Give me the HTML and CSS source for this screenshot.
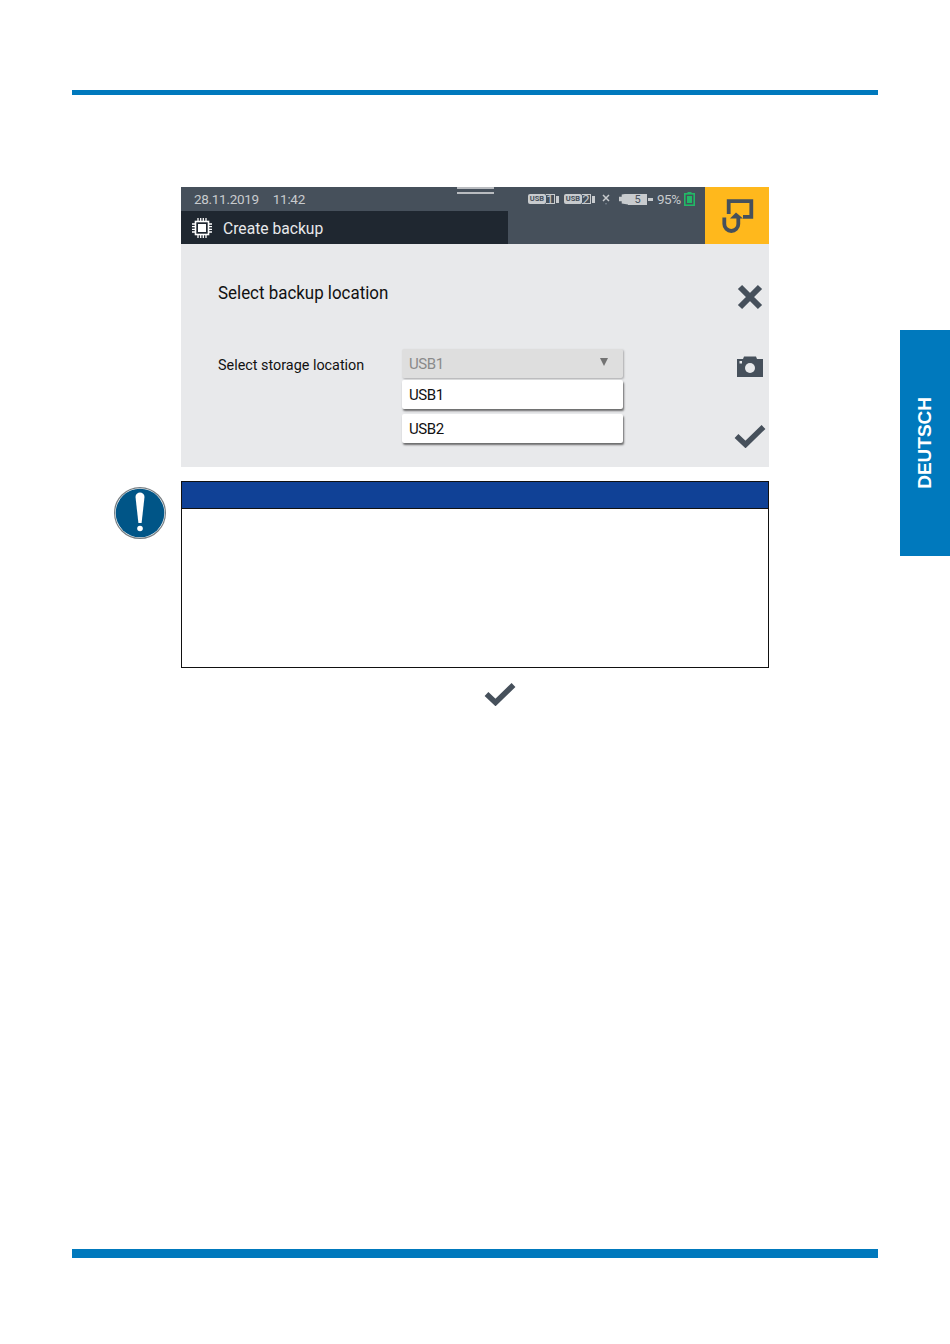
FILE: index.html
```html
<!DOCTYPE html>
<html lang="en">
<head>
  <meta charset="UTF-8" />
  <title>Create backup</title>
  <link rel="stylesheet" href="styles.css">
</head>
<body>
  <div class="page">
    <div class="rule-top"></div>

    <div class="side-tab"><span>DEUTSCH</span></div>

    <main class="content">
      <section class="device">
        <div class="device-head">
          <div class="head-left">
            <div class="status-left">
              <span>28.11.2019</span>
              <span>11:42</span>
            </div>
            <div class="title-bar">
              <svg class="chip-icon" viewBox="0 0 22 22" width="22" height="22">
                <rect x="4.5" y="4.5" width="13" height="13" fill="none" stroke="#fff" stroke-width="1.6"/>
                <rect x="7" y="7" width="8" height="8" fill="#fff"/>
                <path d="M7 1v3M9.7 1v3M12.3 1v3M15 1v3M7 18v3M9.7 18v3M12.3 18v3M15 18v3M1 7h3M1 9.7h3M1 12.3h3M1 15h3M18 7h3M18 9.7h3M18 12.3h3M18 15h3" stroke="#fff" stroke-width="1.3"/>
              </svg>
              <span class="title-text">Create backup</span>
            </div>
          </div>
          <div class="head-right">
            <div class="grip"></div>
            <div class="status-icons">
              <span class="usb"><span class="usb-body">USB</span><span class="usb-num">1</span><span class="usb-end"></span></span>
              <span class="usb"><span class="usb-body">USB</span><span class="usb-num">2</span><span class="usb-end"></span></span>
              <svg class="net-x" viewBox="0 0 10 12" width="10" height="12">
                <path d="M2 2l6 6M8 2l-6 6" stroke="#c8cbce" stroke-width="1.5"/>
                <rect x="4.3" y="10" width="1.4" height="1.4" fill="#7d8894"/>
              </svg>
              <span class="probe"><span class="probe-tip"></span><span class="probe-body">5</span><span class="probe-end"></span></span>
              <span class="percent">95%</span>
              <svg class="battery" viewBox="0 0 11 14" width="11" height="14">
                <rect x="3.5" y="0" width="4" height="2" fill="#22b866"/>
                <rect x="0.8" y="1.8" width="9.4" height="11.4" fill="none" stroke="#22b866" stroke-width="1.6"/>
                <rect x="3" y="4" width="5" height="7" fill="#22b866"/>
              </svg>
            </div>
          </div>
          <div class="home-btn">
            <svg viewBox="0 0 34 34" width="34" height="34">
              <path d="M8.700 15V2.200H31.300V17.800H23" fill="none" stroke="#46505b" stroke-width="3.800"/>
              <path d="M4.300 18.500V25a7 7 0 0 0 14 0V18" fill="none" stroke="#46505b" stroke-width="3.800"/>
              <path d="M10 19.500L16 13.500L23 19.500z" fill="#46505b"/>
            </svg>
          </div>
        </div>

        <div class="device-body">
          <div class="form-area">
            <h1 class="form-title">Select backup location</h1>
            <div class="form-row">
              <label class="form-label">Select storage location</label>
              <div class="dropdown">
                <div class="dropdown-current">
                  <span>USB1</span>
                  <span class="caret"></span>
                </div>
                <div class="dropdown-option">USB1</div>
                <div class="dropdown-option">USB2</div>
              </div>
            </div>
          </div>
          <div class="tools">
            <svg viewBox="0 0 26 26" width="26" height="26">
              <path d="M3 3l20 20M23 3L3 23" stroke="#46505b" stroke-width="6"/>
            </svg>
            <svg viewBox="0 0 28 22" width="28" height="22">
              <path d="M1 3H7L8 .5H20L21 3H27V21H1z" fill="#46505b"/>
              <circle cx="14" cy="12" r="5" fill="#e8e9eb"/>
              <rect x="3.500" y="5" width="2.500" height="2.500" fill="#e8e9eb"/>
            </svg>
            <svg viewBox="0 0 32 24" width="32" height="24">
              <path d="M2.500 12l9 8.500L29.500 3" fill="none" stroke="#46505b" stroke-width="5.500"/>
            </svg>
          </div>
        </div>
      </section>

      <section class="notice">
        <svg class="notice-icon" viewBox="0 0 52 52" width="52" height="52">
          <circle cx="26" cy="26" r="25.400" fill="#fff" stroke="#777f84" stroke-width="1.200"/>
          <circle cx="26" cy="26" r="24.300" fill="#005587"/>
          <path d="M21.500 10c0-6 9-6 9 0L27.600 36h-3.200z" fill="#fff"/>
          <circle cx="26" cy="41.500" r="2.800" fill="#fff"/>
        </svg>
        <div class="notice-head"></div>
        <div class="notice-body"></div>
      </section>

      <div class="step-check">
        <svg viewBox="0 0 32 24" width="32" height="24">
          <path d="M2.500 12l9 8.500L29.500 3" fill="none" stroke="#46505b" stroke-width="5.500"/>
        </svg>
      </div>
    </main>

    <div class="rule-bottom"></div>
  </div>
</body>
</html>
```

FILE: styles.css
```css
* {
  box-sizing: border-box;
  margin: 0;
  padding: 0;
}

body {
  background: #fff;
  font-family: Roboto, 'Liberation Sans', sans-serif;
  color: #111;
}

.page {
  position: relative;
  height: 1344px;
  padding: 90px 72px 0;
  overflow: hidden;
}

.rule-top {
  height: 5px;
  background: #0079bd;
}

.rule-bottom {
  height: 9px;
  margin-top: 543px;
  background: #0079bd;
}

.side-tab {
  position: absolute;
  top: 330px;
  right: 0;
  width: 50px;
  height: 226px;
  background: #0079bd;
  display: flex;
  align-items: center;
  justify-content: center;
}

.side-tab span {
  writing-mode: vertical-rl;
  transform: rotate(180deg);
  font-family: 'Liberation Sans', sans-serif;
  font-weight: bold;
  font-size: 19px;
  color: #fff;
}

.content {
  margin: 92px 0 0 109px;
  width: 588px;
}

/* device screen */
.device-head {
  display: flex;
  height: 57px;
  background: #46505b;
}

.head-left {
  width: 327px;
  display: flex;
  flex-direction: column;
}

.status-left {
  height: 24px;
  padding-left: 13px;
  display: flex;
  gap: 14px;
  align-items: center;
  font-size: 13.500px;
  letter-spacing: -0.3px;
  color: #c8cbce;
}

.title-bar {
  height: 33px;
  background: #1f2730;
  padding-left: 10px;
  display: flex;
  align-items: center;
  gap: 10px;
}

/* the screen font is narrower than Roboto */
.title-text {
  font-size: 17px;
  color: #e8e9eb;
  transform: scaleX(0.92);
  transform-origin: left;
}

.head-right {
  position: relative;
  width: 197px;
}

.grip {
  position: absolute;
  top: 0;
  left: -51px;
  width: 37px;
  height: 7px;
  border-top: 2px solid #b9bcc0;
  border-bottom: 2px solid #b9bcc0;
}

.status-icons {
  height: 24px;
  padding-left: 20px;
  display: flex;
  align-items: center;
  color: #c8cbce;
}

.usb {
  display: flex;
  align-items: center;
  width: 36px;
  height: 10px;
}

.usb-body {
  width: 18px;
  height: 10px;
  background: #c8cbce;
  color: #46505b;
  border-radius: 2px;
  font-size: 7.500px;
  font-weight: bold;
  line-height: 10px;
  text-align: center;
}

.usb-num {
  width: 9px;
  height: 10px;
  font-size: 13px;
  line-height: 10px;
  text-align: center;
  border: solid #c8cbce;
  border-width: 1px 1px 1px 0;
}

.usb-end {
  width: 3px;
  height: 7px;
  margin-left: 1px;
  background: #c8cbce;
}

.net-x {
  margin-left: 1px;
}

.probe {
  display: flex;
  align-items: center;
  margin-left: 8px;
}

.probe-tip {
  width: 9px;
  height: 11px;
  background: #c8cbce;
  clip-path: polygon(0 30%, 30% 30%, 30% 10%, 100% 0, 100% 100%, 30% 90%, 30% 70%, 0 70%);
}

.probe-body {
  width: 19px;
  height: 11px;
  background: #c8cbce;
  color: #46505b;
  font-size: 11px;
  line-height: 11px;
  text-align: center;
}

.probe-end {
  width: 5px;
  height: 3px;
  margin-left: 1px;
  background: #c8cbce;
}

.percent {
  margin-left: 4px;
  font-size: 13.500px;
  letter-spacing: -0.5px;
}

.battery {
  margin-left: 3px;
}

.home-btn {
  width: 64px;
  background: #ffb81c;
  display: flex;
  align-items: center;
  justify-content: center;
}

.device-body {
  display: flex;
  height: 223px;
  background: #e8e9eb;
}

.form-area {
  flex: 1;
  padding: 37px 0 0 37px;
}

.form-title {
  font-weight: normal;
  font-size: 18px;
  line-height: 24px;
  margin-bottom: 44px;
  transform: scaleX(0.94);
  transform-origin: left;
}

.form-row {
  display: flex;
  align-items: flex-start;
}

.form-label {
  width: 184px;
  padding-top: 6px;
  font-size: 15px;
  line-height: 20px;
  transform: scaleX(0.958);
  transform-origin: left;
}

.dropdown {
  width: 221px;
}

.dropdown-current,
.dropdown-option {
  height: 29px;
  padding: 0 7px;
  display: flex;
  align-items: center;
  font-size: 15px;
  letter-spacing: -0.4px;
  border-radius: 2px;
  box-shadow: 1px 2px 2px rgba(40, 40, 40, 0.65);
}

.dropdown-current {
  justify-content: space-between;
  background: #dedede;
  color: #8a8a8a;
  margin-bottom: 2px;
  box-shadow: 1px 1px 2px rgba(60, 60, 60, 0.35);
}

.dropdown-option {
  background: #fff;
  margin-bottom: 5px;
  color: #111;
}

.caret {
  width: 0;
  height: 0;
  margin: -3px 8px 0 0;
  border-left: 4px solid transparent;
  border-right: 4px solid transparent;
  border-top: 8px solid #737373;
}

.tools {
  width: 40px;
  padding: 40px 0 0 2px;
  display: flex;
  flex-direction: column;
  align-items: center;
  gap: 46px;
}

/* notice box */
.notice {
  position: relative;
  margin-top: 14px;
  height: 187px;
  border: 1px solid #111;
}

.notice-icon {
  position: absolute;
  top: 5px;
  left: -68px;
}

.notice-head {
  height: 26px;
  background: #104196;
  border-bottom: 1px solid #111;
  box-sizing: content-box;
}

.step-check {
  margin: 14px 0 0 303px;
  height: 24px;
}

.step-check svg {
  display: block;
}
```
